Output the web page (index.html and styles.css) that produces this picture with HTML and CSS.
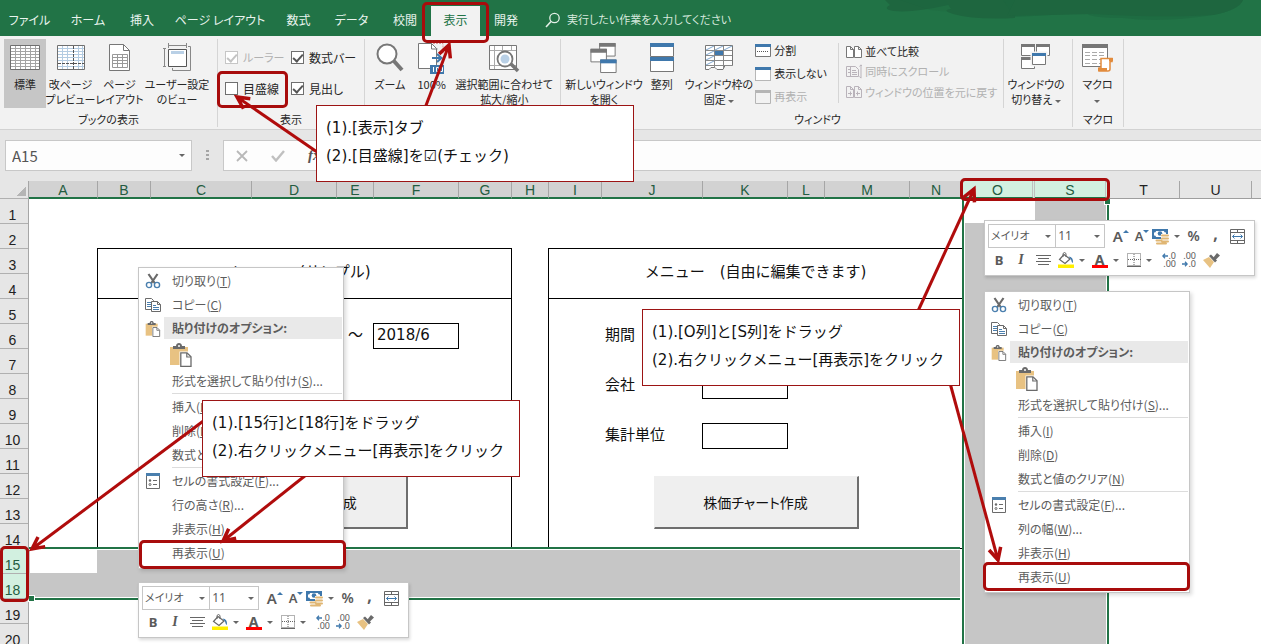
FILE: index.html
```html
<!DOCTYPE html>
<html lang="ja">
<head>
<meta charset="utf-8">
<meta name="viewport" content="width=device-width, initial-scale=1">
<title>Excel</title>
<link rel="stylesheet" href="styles.css">
</head>
<body>
<svg class="defs" aria-hidden="true">
  <defs>
    <marker id="head" markerUnits="userSpaceOnUse" markerWidth="18" markerHeight="18" refX="14" refY="9" orient="auto">
      <path d="M2 3L14 9L2 15" fill="none" stroke="#b00c0c" stroke-width="3.5"/>
      <path d="M7 6L14 9L7 12z" fill="#b00c0c"/>
    </marker>
    <symbol id="i-cut" viewBox="0 0 16 16">
      <path d="M3.500 1L10 10.500M12.500 1L6 10.500" stroke="#6a6a6a" stroke-width="2.200" fill="none"/>
      <circle cx="4" cy="12" r="2.600" fill="#fff" stroke="#4a7fae" stroke-width="1.400"/>
      <circle cx="12" cy="12" r="2.600" fill="#fff" stroke="#4a7fae" stroke-width="1.400"/>
    </symbol>
    <symbol id="i-copy" viewBox="0 0 16 16">
      <path d="M.5 1.500h6l2 2v9h-8z" fill="#fff" stroke="#6a6a6a"/>
      <path d="M2 5.500h4M2 7.500h4M2 9.500h4" stroke="#4a7fae"/>
      <path d="M6.500 4.500h6l3 3v7h-9z" fill="#fff" stroke="#6a6a6a"/>
      <path d="M12.500 4.500v3h3" fill="none" stroke="#6a6a6a"/>
      <path d="M8 8.500h3M8 10.500h6M8 12.500h6" stroke="#4a7fae"/>
    </symbol>
    <symbol id="i-paste" viewBox="0 0 22 24">
      <path d="M0 4h18v18H0z" fill="#e8c282"/>
      <path d="M3 3h3c0-4 6-4 6 0h3v3H3z" fill="#6a6a6a"/>
      <circle cx="9" cy="3" r="1" fill="#fff"/>
      <path d="M9.500 8.500h11v15h-11z" fill="#fff"/>
      <path d="M10.800 9.800h6.200l4 4v9.500H10.800z" fill="#fff" stroke="#6a6a6a" stroke-width="1.300"/>
      <path d="M16.800 10v4h4" fill="none" stroke="#6a6a6a" stroke-width="1.200"/>
    </symbol>
    <symbol id="i-format" viewBox="0 0 14 16">
      <path d="M.5 .5h13v15H.5z" fill="#fff" stroke="#6a6a6a"/>
      <path d="M0 0h14v3H0z" fill="#4a7fae"/>
      <circle cx="4" cy="7.500" r="1.200" fill="#6a6a6a"/><circle cx="4" cy="11.500" r="1" fill="none" stroke="#6a6a6a"/>
      <path d="M7 7.500h4M7 11.500h4" stroke="#6a6a6a"/>
    </symbol>
    <symbol id="i-money" viewBox="0 0 17 17">
      <path d="M1 2h14v8H1z" fill="#fff" stroke="#3f78ac" stroke-width="2"/>
      <path d="M1 2l2.500 2M15 2l-2.500 2M1 10l2.500-2" stroke="#3f78ac" stroke-width="2"/>
      <circle cx="8" cy="5.500" r="2.300" fill="#3f78ac"/>
      <path d="M9 6h8v11H4v-5h5z" fill="#fff"/>
      <path d="M10 7.500h6M10 10.500h6M10 13.500h6M4.500 12.500h5M5 15.500h9" stroke="#e0b673" stroke-width="2" stroke-linecap="round"/>
    </symbol>
    <symbol id="i-merge" viewBox="0 0 15 15">
      <path d="M.5 .5h14v14H.5zM.5 3.500h14M.5 11.500h14M7.500 .5v3M7.500 11.500v3" fill="none" stroke="#666"/>
      <path d="M2.500 7.500h10M4.500 5.500l-2 2l2 2M10.500 5.500l2 2l-2 2" fill="none" stroke="#3f78ac"/>
    </symbol>
    <symbol id="i-align" viewBox="0 0 15 12">
      <path d="M0 1.500h15M2 4.500h11M0 7.500h15M2 10.500h11" stroke="#666"/>
    </symbol>
    <symbol id="i-fill" viewBox="0 0 16 16">
      <path d="M6 2.500L12 7L7 11.500L1.500 7.500z" fill="#fff" stroke="#666" stroke-width="1.200"/>
      <path d="M5 5V1.500q1.500-2 3 0V5" fill="none" stroke="#666"/>
      <path d="M10.500 4.500q5 0 4.500 6.500q-1.500-.5-2-3.500z" fill="#3f78ac"/>
      <path d="M0 12.500h16v3.500H0z" fill="#ffef00"/>
    </symbol>
    <symbol id="i-border" viewBox="0 0 14 14">
      <path d="M.5 .5h13v12H.5zM7 1v12M1 6.500h13" fill="none" stroke="#666" stroke-dasharray="1 1"/>
      <path d="M0 13.500h14" stroke="#666"/>
    </symbol>
    <symbol id="i-brush" viewBox="0 0 17 15">
      <path d="M0 7l6-3l5 5l-4 6z" fill="#e8c282"/>
      <path d="M6 3l2-1.500l6 6L12 9.500z" fill="#6a6a6a"/>
      <path d="M10 5l4-5l3 2.500L12.500 7z" fill="#6a6a6a"/>
    </symbol>
    <symbol id="i-left" viewBox="0 0 6 6"><path d="M6 3H1M3 .8L.8 3L3 5.200" fill="none" stroke="#3f78ac" stroke-width="1.300"/></symbol>
    <symbol id="i-right" viewBox="0 0 6 6"><path d="M0 3h5M3 .8L5.200 3L3 5.200" fill="none" stroke="#3f78ac" stroke-width="1.300"/></symbol>
  </defs>
</svg>

<div class="app">
  <header class="titlebar">
    <svg class="swirl" viewBox="0 0 376 24" aria-hidden="true">
      <g fill="#1e663f"><path d="M0 0h75l-12 5q-35 8-54 6q-12-2-4-6z"/><path d="M15 8h90v10q-60 5-88-4z" opacity="0"/><path d="M16 12q20-4 40 2l40-4v8q-50 4-80-6z" opacity="0"/><path d="M15 0h80v8q-20 6-50 2z" opacity=".3"/><path d="M60 0h70v18q-40 2-62-4q-12-4-2-5z"/><path d="M118 0h240q-4 10-30 15q-50 8-90 3q-34 0-36-5l-72 4z" opacity=".55"/><path d="M122 16L130 0h228q-4 10-30 15q-50 3-120-1z"/></g>
    </svg>
    <nav class="tabs" aria-label="リボン タブ">
      <button>ファイル</button><button>ホーム</button><button>挿入</button><button>ページ レイアウト</button><button>数式</button><button>データ</button><button>校閲</button><button class="active">表示</button><button>開発</button>
    </nav>
    <label class="tell">
      <svg width="16" height="16" viewBox="0 0 16 16" aria-hidden="true"><circle cx="9.500" cy="6" r="4.700" fill="none" stroke="#e4f0e8" stroke-width="1.300"/><path d="M6 9.500L1 15" stroke="#e4f0e8" stroke-width="1.600"/></svg>
      <input type="text" placeholder="実行したい作業を入力してください" aria-label="操作アシスト">
    </label>
  </header>

  <section class="ribbon">
    <div class="group g-book">
      <div class="tools">
        <button class="big w-s on">
          <svg width="30" height="30" viewBox="0 0 30 30"><path d="M.5 2.500h29v24H.5z" fill="#fff" stroke="#6f6f6f"/><path d="M1 5.500h28M1 8.500h28M1 11.500h28M1 14.500h28M1 17.500h28M1 20.500h28M1 23.500h28M5.500 3v23M10.500 3v23M15.500 3v23M20.500 3v23M25.500 3v23" stroke="#a4a4a4"/></svg>
          <span>標準</span>
        </button>
        <button class="big w-m">
          <svg width="28" height="30" viewBox="0 0 28 30"><path d="M.5 2.500h27v24H.5z" fill="#fff" stroke="#6f6f6f"/><path d="M1 5.500h26M1 8.500h26M1 11.500h26M1 14.500h26M1 17.500h26M1 23.500h26M5.500 3v23M10.500 3v23M21.500 3v23M25.500 3v23" stroke="#b4cce2"/><path d="M16.500 3v23M1 20.500h26" stroke="#555" stroke-dasharray="3 1"/></svg>
          <span>改ページ<br>プレビュー</span>
        </button>
        <button class="big w-m">
          <svg width="22" height="30" viewBox="0 0 22 30"><path d="M.5 1.500h14l6 6v20H.5z" fill="#fff" stroke="#777"/><path d="M14.500 1.500v6h6" fill="none" stroke="#777"/><path d="M3.500 11.500h15v13h-15zM3.500 14.500h15M3.500 17.500h15M3.500 20.500h15M8.500 11.500v13M13.500 11.500v13" fill="none" stroke="#999"/></svg>
          <span>ページ<br>レイアウト</span>
        </button>
        <button class="big w-l">
          <svg width="28" height="30" viewBox="0 0 28 30"><path d="M5.500 6.500h18v17h-18z" fill="#fff" stroke="#555"/><path d="M8 8h13v3H8z" fill="#b9d0e6"/><path d="M5 2.500h18M5.500 0v5M23.500 0v5M1.500 6v17M0 5.500h3M0 23.500h3M25 3.500h2.500v24h-18V25" fill="none" stroke="#888"/></svg>
          <span>ユーザー設定<br>のビュー</span>
        </button>
      </div>
      <div class="caption">ブックの表示</div>
    </div>
    <div class="group g-show">
      <div class="checks">
        <label class="off"><input type="checkbox" checked disabled>ルーラー</label>
        <label><input type="checkbox" checked>数式バー</label>
        <label><input type="checkbox">目盛線</label>
        <label><input type="checkbox" checked>見出し</label>
      </div>
      <div class="caption">表示</div>
    </div>
    <div class="group g-zoom">
      <div class="tools">
        <button class="big w-s">
          <svg width="28" height="30" viewBox="0 0 28 30"><path d="M17 17L26 27" stroke="#777" stroke-width="4"/><circle cx="11" cy="11" r="9.500" fill="#fff" stroke="#777" stroke-width="2"/></svg>
          <span>ズーム</span>
        </button>
        <button class="big w-s">
          <svg width="28" height="30" viewBox="0 0 28 30"><path d="M.5 .5h13l5 5v20H.5z" fill="#fff" stroke="#777"/><path d="M13.500 .5v5.500h6" fill="none" stroke="#777"/><path d="M15 .5h10v10" fill="none" stroke="#d99" stroke-dasharray="2 1"/><path d="M14 15h9M19 11l4.500 4l-4.500 4" fill="none" stroke="#3f78ac" stroke-width="2"/><path d="M12 22h14v9H12z" fill="#3f78ac"/><path d="M15.500 24v5M18.500 24.500h2v4h-2zM22.500 24.500h2v4h-2z" fill="none" stroke="#fff"/></svg>
          <span>100%</span>
        </button>
        <button class="big w-x">
          <svg width="30" height="30" viewBox="0 0 30 30"><path d="M.5 2.500h27v24H.5z" fill="#fff" stroke="#777"/><path d="M1 7.500h26M1 22.500h26M5.500 3v23M13.500 3v4M22.500 3v4" stroke="#aaa"/><path d="M21 20l8 8" stroke="#777" stroke-width="3.500"/><circle cx="16" cy="16" r="7.500" fill="#fff" stroke="#777" stroke-width="1.800"/><circle cx="16" cy="16" r="4.500" fill="#b9d0e6"/></svg>
          <span>選択範囲に合わせて<br>拡大/縮小</span>
        </button>
      </div>
    </div>
    <div class="group g-window">
      <div class="tools">
        <button class="big w-xl">
          <svg width="28" height="31" viewBox="0 0 28 31"><g fill="#fff" stroke="#777"><path d="M9.500 .5h16v13h-16z"/><path d="M.5 6.500h16v13H.5z"/><path d="M10.500 17.500h16v13h-16z"/></g><path d="M9 0h17v4H9zM0 6h17v4H0z" fill="#777"/><path d="M10 17h17v4H10z" fill="#3f78ac"/></svg>
          <span>新しいウィンドウ<br>を開く</span>
        </button>
        <button class="big w-s">
          <svg width="24" height="30" viewBox="0 0 24 30"><path d="M.5 .5h23v13H.5zM.5 14.500h23v14H.5z" fill="#fff" stroke="#777"/><path d="M0 0h24v4H0zM0 14h24v4H0z" fill="#3f78ac"/></svg>
          <span>整列</span>
        </button>
        <button class="big w-xl">
          <svg width="28" height="30" viewBox="0 0 28 30"><path d="M.5 2.500h27v20H20l-2 4h-6l-2-2h-4l-2 2H.5z" fill="#fff" stroke="#777"/><path d="M1 7.500h26M1 12.500h26M1 17.500h26M1 22.500h26M9.500 3v22M18.500 3v22" stroke="#888"/><path d="M1 7l8-4M10 7l8-4M19 7l8-4M1 12l8-4M1 17l8-4M1 22l8-4" stroke="#7fa8cf"/><path d="M10 8h8v4h-8z" fill="#3f78ac"/></svg>
          <span>ウィンドウ枠の<br>固定 <i class="caret"></i></span>
        </button>
        <div class="stack">
          <button><svg width="16" height="13" viewBox="0 0 16 13"><path d="M.5 .5h15v12H.5z" fill="#fff" stroke="#777"/><path d="M0 0h16v3H0z" fill="#3f78ac"/><path d="M2 7.500h12" stroke="#555" stroke-dasharray="1 1"/></svg>分割</button>
          <button><svg width="16" height="14" viewBox="0 0 16 14"><path d="M.5 .5h15v13H.5z" fill="#fff" stroke="#777" stroke-dasharray="1 1"/><path d="M0 0h16v3H0z" fill="#3f78ac"/></svg>表示しない</button>
          <button disabled><svg width="16" height="14" viewBox="0 0 16 14"><path d="M.5 .5h15v13H.5z" fill="#f2f2f2" stroke="#b5b5b5"/><path d="M0 0h16v3H0z" fill="#b5b5b5"/></svg>再表示</button>
        </div>
        <div class="stack wide">
          <button><svg width="16" height="12" viewBox="0 0 16 12"><path d="M.5 .5h4l3 3v8h-7zM8.500 .5h4l3 3v8h-7zM4.500 .5v3h3M12.500 .5v3h3" fill="#fff" stroke="#777"/></svg>並べて比較</button>
          <button disabled><svg width="16" height="15" viewBox="0 0 16 15"><path d="M6 2.500H.5v10H6M4.500 2.500h5l3 3v7h-8z" fill="none" stroke="#b9b3ba"/><path d="M2 5.500h2M2 8.500h2M6 6.500h4M6 8.500h5M6 10.500h5M15 1v13M13.500 2.500L15 .8l1.500 1.700M13.500 12.500l1.500 1.700" fill="none" stroke="#b9b3ba"/></svg>同時にスクロール</button>
          <button disabled><svg width="16" height="12" viewBox="0 0 16 12"><path d="M.5 .5h4l3 3v8h-7zM8.500 .5h4l3 3v8h-7zM4.500 .5v3h3M12.500 .5v3h3M2 7.500h4M4.500 5.500v4M10 7.500h4M11.500 5.500v4" fill="none" stroke="#b9b3ba"/></svg>ウィンドウの位置を元に戻す</button>
        </div>
        <button class="big w-l split">
          <svg width="30" height="30" viewBox="0 0 30 30"><g fill="#fff" stroke="#777"><path d="M.5 1.500h13v11H.5z"/><path d="M15.500 1.500h13v11h-13z"/><path d="M.5 14.500h13v11H.5z"/></g><path d="M0 1h14v3H0zM15 1h14v3H15zM0 14h14v3H0z" fill="#777"/><path d="M10.500 9.500h15v13h-15z" fill="#fff" stroke="#f2f2f2" stroke-width="2"/><path d="M11.500 10.500h13v11h-13z" fill="#fff" stroke="#777"/><path d="M11 10h14v3H11z" fill="#3f78ac"/></svg>
          <span>ウィンドウの<br>切り替え <i class="caret"></i></span>
        </button>
      </div>
      <div class="caption">ウィンドウ</div>
    </div>
    <div class="group g-macro">
      <div class="tools">
        <button class="big w-m">
          <svg width="31" height="30" viewBox="0 0 31 30"><path d="M.5 1.500h25v22H.5z" fill="#fff" stroke="#777"/><path d="M0 1h26v4H0z" fill="#777"/><path d="M3 9.500h20M3 12.500h20M3 16.500h20M3 20.500h20" stroke="#aaa" stroke-dasharray="5 2"/><path d="M19 15.500h11v3h-2V26q0 2-2 2H17v-3h2z" fill="#fff" stroke="#e28b3c" stroke-width="1.500"/><path d="M16 25h9v3h-9zM27 15h4v3h-4z" fill="#e28b3c"/></svg>
          <span>マクロ<br><i class="caret"></i></span>
        </button>
      </div>
      <div class="caption">マクロ</div>
    </div>
  </section>

  <section class="formula">
    <div class="namebox"><input type="text" value="A15" aria-label="名前ボックス"><i class="caret"></i></div>
    <div class="dots"></div>
    <div class="fxbox">
      <button aria-label="キャンセル"><svg width="12" height="12" viewBox="0 0 12 12"><path d="M1 1l10 10M11 1L1 11" stroke="#b8b8b8" stroke-width="1.800"/></svg></button>
      <button aria-label="入力"><svg width="14" height="12" viewBox="0 0 14 12"><path d="M1 6l4 4.500L13 1" fill="none" stroke="#c0c0c0" stroke-width="2.400"/></svg></button>
      <button class="fx" aria-label="関数の挿入">fx</button>
      <input type="text" aria-label="数式バー">
    </div>
  </section>

  <div class="heads">
    <div class="corner"></div>
    <div>A</div><div>B</div><div>C</div><div>D</div><div>E</div><div>F</div><div>G</div><div>H</div><div>I</div><div>J</div><div>K</div><div>L</div><div>M</div><div>N</div><div class="picked">O</div><div class="picked">S</div><div class="plain">T</div><div class="plain">U</div><div class="plain"></div>
  </div>
  <main class="sheet">
    <div class="rows">
      <div>1</div><div>2</div><div>3</div><div>4</div><div>5</div><div>6</div><div>7</div><div>8</div><div>9</div><div>10</div><div>11</div><div>12</div><div>13</div><div>14</div><div class="picked">15</div><div class="picked">18</div><div>19</div><div>20</div>
    </div>
    <div class="cells">
      <div class="panel p1"></div>
      <div class="panel-title t1">メニュー　(サンプル)</div>
      <div class="cell tilde">～</div>
      <div class="entry e1">2018/6</div>
      <button class="sheet-btn b1">株価チャート作成</button>

      <div class="panel p2"></div>
      <div class="panel-title t2">メニュー　(自由に編集できます)</div>
      <div class="cell l1">期間</div>
      <div class="cell l2">会社</div>
      <div class="cell l3">集計単位</div>
      <div class="entry e2"></div>
      <div class="entry e3"></div>
      <button class="sheet-btn b2">株価チャート作成</button>

      <div class="sel rowsel"></div>
      <div class="blank a15"></div>
      <div class="sel colsel"></div>
      <div class="blank o1"></div>
    </div>
  </main>

  <div class="menu menu-row" role="menu">
    <button><svg><use href="#i-cut"/></svg>切り取り(<u>T</u>)</button>
    <button><svg><use href="#i-copy"/></svg>コピー(<u>C</u>)</button>
    <div class="menu-head"><svg><use href="#i-paste"/></svg><b>貼り付けのオプション:</b></div>
    <button class="paste" aria-label="貼り付け"><svg><use href="#i-paste"/></svg></button>
    <button>形式を選択して貼り付け(<u>S</u>)...</button>
    <hr>
    <button>挿入(<u>I</u>)</button>
    <button>削除(<u>D</u>)</button>
    <button>数式と値のクリア(<u>N</u>)</button>
    <hr>
    <button><svg><use href="#i-format"/></svg>セルの書式設定(<u>F</u>)...</button>
    <button>行の高さ(<u>R</u>)...</button>
    <button>非表示(<u>H</u>)</button>
    <button>再表示(<u>U</u>)</button>
  </div>
  <div class="menu menu-col" role="menu">
    <button><svg><use href="#i-cut"/></svg>切り取り(<u>T</u>)</button>
    <button><svg><use href="#i-copy"/></svg>コピー(<u>C</u>)</button>
    <div class="menu-head"><svg><use href="#i-paste"/></svg><b>貼り付けのオプション:</b></div>
    <button class="paste" aria-label="貼り付け"><svg><use href="#i-paste"/></svg></button>
    <button>形式を選択して貼り付け(<u>S</u>)...</button>
    <hr>
    <button>挿入(<u>I</u>)</button>
    <button>削除(<u>D</u>)</button>
    <button>数式と値のクリア(<u>N</u>)</button>
    <hr>
    <button><svg><use href="#i-format"/></svg>セルの書式設定(<u>F</u>)...</button>
    <button>列の幅(<u>W</u>)...</button>
    <button>非表示(<u>H</u>)</button>
    <button>再表示(<u>U</u>)</button>
  </div>

  <div class="mini mini-row">
    <div class="mini-line">
      <div class="pick font"><select aria-label="フォント"><option>メイリオ</option></select><i class="caret"></i></div>
      <div class="pick size"><select aria-label="フォント サイズ"><option>11</option></select><i class="caret"></i></div>
      <button class="grow" aria-label="拡大">A<i class="up"></i></button>
      <button class="grow small" aria-label="縮小">A<i class="down"></i></button>
      <button class="drop" aria-label="通貨"><svg width="17" height="17"><use href="#i-money"/></svg><i class="caret"></i></button>
      <button class="sym">%</button>
      <button class="sym comma">,</button>
      <button class="merge" aria-label="結合"><svg width="15" height="15"><use href="#i-merge"/></svg></button>
    </div>
    <div class="mini-line second">
      <button class="bold">B</button>
      <button class="ital">I</button>
      <button aria-label="中央揃え"><svg width="15" height="12"><use href="#i-align"/></svg></button>
      <button class="drop" aria-label="塗りつぶし"><svg width="16" height="16"><use href="#i-fill"/></svg><i class="caret"></i></button>
      <button class="drop"><span class="ink">A</span><i class="caret"></i></button>
      <button class="drop" aria-label="罫線"><svg width="14" height="14"><use href="#i-border"/></svg><i class="caret"></i></button>
      <button class="dec"><span><svg width="6" height="6"><use href="#i-left"/></svg>.0</span><span>.00</span></button>
      <button class="dec"><span>.00</span><span><svg width="6" height="6"><use href="#i-right"/></svg>.0</span></button>
      <button aria-label="書式のコピー"><svg width="17" height="15"><use href="#i-brush"/></svg></button>
    </div>
  </div>
  <div class="mini mini-col">
    <div class="mini-line">
      <div class="pick font"><select aria-label="フォント"><option>メイリオ</option></select><i class="caret"></i></div>
      <div class="pick size"><select aria-label="フォント サイズ"><option>11</option></select><i class="caret"></i></div>
      <button class="grow" aria-label="拡大">A<i class="up"></i></button>
      <button class="grow small" aria-label="縮小">A<i class="down"></i></button>
      <button class="drop" aria-label="通貨"><svg width="17" height="17"><use href="#i-money"/></svg><i class="caret"></i></button>
      <button class="sym">%</button>
      <button class="sym comma">,</button>
      <button class="merge" aria-label="結合"><svg width="15" height="15"><use href="#i-merge"/></svg></button>
    </div>
    <div class="mini-line second">
      <button class="bold">B</button>
      <button class="ital">I</button>
      <button aria-label="中央揃え"><svg width="15" height="12"><use href="#i-align"/></svg></button>
      <button class="drop" aria-label="塗りつぶし"><svg width="16" height="16"><use href="#i-fill"/></svg><i class="caret"></i></button>
      <button class="drop"><span class="ink">A</span><i class="caret"></i></button>
      <button class="drop" aria-label="罫線"><svg width="14" height="14"><use href="#i-border"/></svg><i class="caret"></i></button>
      <button class="dec"><span><svg width="6" height="6"><use href="#i-left"/></svg>.0</span><span>.00</span></button>
      <button class="dec"><span>.00</span><span><svg width="6" height="6"><use href="#i-right"/></svg>.0</span></button>
      <button aria-label="書式のコピー"><svg width="17" height="15"><use href="#i-brush"/></svg></button>
    </div>
  </div>

  <div class="ring r-tab"></div>
  <div class="ring r-check"></div>
  <div class="ring r-cols"></div>
  <div class="ring r-rows"></div>
  <div class="ring r-unhide-row"></div>
  <div class="ring r-unhide-col"></div>
  <svg class="arrows" aria-hidden="true">
    <g stroke="#b00c0c" stroke-width="3" marker-end="url(#head)">
      <path d="M320 154L237 97"/><path d="M425 108L449 45"/><path d="M206 419L32 549"/><path d="M306 475L223 541"/><path d="M918 311L974 189"/><path d="M950 383L998 560"/>
    </g>
  </svg>
  <div class="note n-tab"><p>(1).[表示]タブ</p><p>(2).[目盛線]を☑(チェック)</p></div>
  <div class="note n-row"><p>(1).[15行]と[18行]をドラッグ</p><p>(2).右クリックメニュー[再表示]をクリック</p></div>
  <div class="note n-col"><p>(1).[O列]と[S列]をドラッグ</p><p>(2).右クリックメニュー[再表示]をクリック</p></div>
</div>
</body>
</html>
```
FILE: styles.css
```css
:root {
  --green: #217346;
  --red: #a80c0c;
  --cols: 69px 53px 101px 85px 37px 85px 53px 37px 53px 101px 85px 37px 85px 53px 72px 73px 72px 72px 1fr;
  --ui: "Noto Sans CJK JP", "Noto Sans", sans-serif;
  --cell: "DejaVu Sans", "Noto Sans CJK JP", sans-serif;
  --head: "Liberation Sans", sans-serif;
}
* { box-sizing: border-box; }
body { margin: 0; font: 12px/15px var(--ui); font-feature-settings: "palt"; color: #262626; }
button, input, select { font: inherit; font-feature-settings: inherit; color: inherit; margin: 0; padding: 0; border: 0; background: none; }
button { white-space: nowrap; }
svg { display: block; flex: none; }
.defs { position: absolute; width: 0; height: 0; }
.app { position: relative; display: flex; flex-direction: column; height: 100vh; overflow: hidden; background: #e6e6e6; }
.caret { display: inline-block; border: 3px solid transparent; border-top-color: #666; border-bottom: 0; vertical-align: middle; }

/* title bar and tabs */
.titlebar { position: relative; display: flex; height: 36px; background: var(--green); color: #e9f4ee; }
.swirl { position: absolute; top: 0; right: 0; width: 376px; height: 24px; }
.tabs { display: grid; grid-template-columns: 59px 58px 50px 106px 51px 55px 52px 49px 52px; align-items: end; }
.tabs button { height: 30px; padding-bottom: 3px; }
.tabs .active { background: #f2f2f2; color: var(--green); }
.tell { display: flex; align-items: center; gap: 6px; flex: 1; padding: 3px 0 0 13px; font-size: 11px; }
.tell input { flex: 1; outline: 0; }
.tell input::placeholder { color: #d5e8dc; opacity: 1; }

/* ribbon */
.ribbon { display: flex; height: 94px; padding-top: 3px; background: #f2f2f2; border-bottom: 1px solid #d2d2d2; font-size: 11px; }
.group { display: flex; flex-direction: column; justify-content: space-between; padding: 0 4px; height: 88px; border-right: 1px solid #d5d5d5; }
.tools { display: flex; height: 69px; }
.caption { text-align: center; }
.g-book { width: 218px; }
.g-show { width: 147px; }
.g-zoom { width: 196px; }
.g-window { width: 512px; padding-left: 6px; }
.g-macro { width: 51px; padding: 0; }
.big { display: flex; flex-direction: column; align-items: center; justify-content: flex-start; gap: 4px; padding-top: 4px; text-align: center; }
.big svg { height: 30px; overflow: visible; }
.w-s { width: 42px; }
.w-m { width: 49px; }
.w-l { width: 66px; }
.w-x { width: 104px; }
.w-xl { width: 74px; }
.on { background: #c6c6c6; }
.checks { display: grid; grid-template-columns: 66px 66px; grid-auto-rows: 31px; padding: 3px 0 0 3px; font-size: 12px; }
.checks label { display: flex; align-items: center; gap: 5px; white-space: nowrap; }
.checks input { appearance: none; width: 13px; height: 13px; flex: none; border: 1px solid #6f6f6f; background: #fff; }
.checks input:checked { display: grid; place-items: center; }
.checks input:checked::after { content: ""; width: 4px; height: 8px; margin-bottom: 2px; border: solid #555; border-width: 0 2px 2px 0; rotate: 42deg; }
.checks .off { color: #b1b1b1; font-size: 11px; }
.checks .off input { border-color: #c6c6c6; }
.checks .off input::after { border-color: #c3c3c3; }
.stack { display: flex; flex-direction: column; align-items: flex-start; width: 84px; }
.stack button { display: flex; align-items: center; gap: 3px; height: 23px; }
.stack button:disabled { color: #b1b1b1; }
.stack.wide { width: 167px; padding-left: 7px; border-left: 1px solid #d5d5d5; height: 60px; margin-top: 4px; }
.stack.wide button { height: 22px; }
.stack.wide button:first-child { height: 18px; }
.split { border-left: 1px solid #d5d5d5; }

/* formula bar */
.formula { display: flex; align-items: flex-start; height: 51px; padding: 10px 0 0 5px; }
.namebox, .fxbox { display: flex; align-items: center; height: 31px; border: 1px solid #c8c8c8; background: #fdfdfd; }
.namebox { width: 187px; padding: 0 6px; }
.namebox input { flex: 1; min-width: 0; font-size: 15px; color: #555; }
.dots { width: 3px; height: 11px; margin: 10px 14px 0; background: repeating-linear-gradient(#a5a5a5 0 2px, transparent 2px 4px); }
.fxbox { flex: 1; padding-left: 12px; gap: 23px; border-right: 0; }
.fxbox input { flex: 1; }
.fx { font: italic bold 15px "Liberation Serif", serif; color: #555; }

/* sheet */
.heads { display: grid; grid-template-columns: 29px var(--cols); height: 18px; font: 14px/19px var(--head); text-align: center; color: #245c41; }
.heads > div { border-right: 1px solid #a6a6a6; border-bottom: 2px solid var(--green); background: #d2d2d2; height: 18px; }
.heads .corner { background: linear-gradient(135deg, transparent 50%, #b5b5b5 50%) 16px 5px / 10px 10px no-repeat; border-bottom: 1px solid #b0b0b0; }
.heads .picked { background: #d2f0e0; border-right: 3px double #c0c0c0; }
.heads .plain { background: #e6e6e6; color: #222; border-bottom: 1px solid #9e9e9e; }
.heads .plain:last-child { border-right: 0; }
.sheet { display: flex; flex: 1; min-height: 0; overflow: hidden; }
.rows { width: 29px; flex: none; display: grid; grid-auto-rows: 25px; align-content: start; border-right: 1px solid #a6a6a6; font: 14px/16px var(--head); color: #222; }
.rows div { display: flex; align-items: flex-end; justify-content: center; padding-right: 3px; border-bottom: 1px solid #b0b0b0; }
.rows .picked { background: #d2f0e0; color: #245c41; }
.cells { flex: 1; display: grid; grid-template-columns: var(--cols); grid-template-rows: repeat(18, 25px); background: #fff; font: 15px/22px var(--cell); font-feature-settings: normal; color: #111; }
.panel { border: 1px solid #000; margin: -1px 0 0 -1px; }
.p1 { grid-area: 3 / 2 / 15 / 8; }
.p2 { grid-area: 3 / 9 / 15 / 15; }
.panel-title { margin-left: -1px; border-bottom: 1px solid #000; text-align: center; line-height: 47px; white-space: nowrap; }
.t1 { grid-area: 3 / 2 / 5 / 8; padding-right: 14px; }
.t2 { grid-area: 3 / 9 / 5 / 15; }
.cell { padding-left: 3px; white-space: nowrap; }
.tilde { grid-area: 6 / 5; padding: 0; text-align: center; }
.l1 { grid-area: 6 / 10; }
.l2 { grid-area: 8 / 10; }
.l3 { grid-area: 10 / 10; }
.entry { margin: -1px 0 0 -1px; padding-left: 3px; border: 1px solid #000; }
.e1 { grid-area: 6 / 6; }
.e2 { grid-area: 8 / 11; }
.e3 { grid-area: 10 / 11; }
.sheet-btn { justify-self: center; width: 205px; height: 53px; margin-top: 2px; background: #efefef; border: 1px solid #efefef; border-right: 2px solid #6e6e6e; border-bottom: 2px solid #6e6e6e; font: 14px/20px var(--ui); font-feature-settings: "palt"; }
.b1 { grid-area: 12 / 2 / 15 / 8; }
.b2 { grid-area: 12 / 9 / 15 / 15; }
.sel { position: relative; background: #c6c6c6 content-box; padding: 1px; border: 2px solid var(--green); }
.sel::after { content: ""; position: absolute; width: 5px; height: 5px; background: var(--green); border: solid #fff; border-width: 0; }
.rowsel { grid-area: 15 / 1 / 17 / 15; margin: -2px 3px -1px 0; border-width: 2px 0; padding: 1px 0; }
.rowsel::after { left: 0; bottom: -3px; box-shadow: 0 0 0 1px #fff; }
.colsel { grid-area: 1 / 15 / 19 / 17; margin: 0 -1px; border-width: 0 2px; padding: 0 1px; }
.colsel::after { right: -3px; top: 0; box-shadow: 0 0 0 1px #fff; }
.blank { background: #fff; z-index: 1; }
.a15 { grid-area: 15 / 1; margin: 0 1px 1px; }
.o1 { grid-area: 1 / 15; margin: 0 0 1px 2px; }

/* context menus */
.menu { position: absolute; width: 206px; padding: 1px 1px 3px; background: #fff; border: 1px solid #c6c6c6; box-shadow: 2px 2px 4px rgba(0, 0, 0, .15); color: #5c5c5c; z-index: 2; }
.menu-row { left: 138px; top: 267px; }
.menu-col { left: 984px; top: 291px; }
.menu button, .menu-head { position: relative; display: flex; align-items: center; width: 100%; height: 24px; padding: 0 0 2px 32px; }
.menu svg { position: absolute; left: 5px; top: 4px; width: 16px; height: 16px; }
.menu .menu-head { height: 22px; background: linear-gradient(#e9e9e9, #e9e9e9) 24px 0 no-repeat; }
.menu .paste { height: 30px; }
.menu .paste svg { left: 30px; width: 22px; height: 24px; }
.menu hr { height: 1px; margin: 0 0 1px 32px; border: 0; background: #dcdcdc; }

/* mini toolbars */
.mini { position: absolute; width: 271px; height: 56px; padding: 3px; background: #fff; border: 1px solid #c6c6c6; box-shadow: 1px 2px 3px rgba(0, 0, 0, .15); color: #5a5a5a; z-index: 2; }
.mini-row { left: 138px; top: 582px; }
.mini-col { left: 984px; top: 220px; }
.mini-line { display: flex; align-items: center; height: 24px; }
.mini-line button { display: flex; align-items: center; justify-content: center; width: 22px; }
.pick { position: relative; height: 24px; border: 1px solid #c6c6c6; }
.pick select { appearance: none; width: 100%; height: 100%; padding: 0 0 2px 2px; outline: 0; }
.pick .caret { position: absolute; right: 4px; top: 10px; pointer-events: none; }
.font { width: 69px; }
.font select { font-size: 11px; }
.size { width: 51px; margin: 0 4px 0 -1px; }
.size select { font-family: "Noto Sans", sans-serif; }
.mini-line .grow { width: 23px; font: 600 15px/20px "Noto Sans", sans-serif; }
.mini-line .small { width: 20px; font-size: 13px; }
.up, .down { width: 6px; margin-bottom: 10px; border: 3px solid transparent; }
.up { border-top: 0; border-bottom-color: #3f78ac; }
.down { border-bottom: 0; border-top-color: #3f78ac; }
.mini-line .drop { width: 28px; gap: 5px; }
.mini-line.second .drop { width: 34px; }
.mini-line .sym { font: 600 14px/20px "Noto Sans", sans-serif; width: 28px; }
.mini-line .comma { width: 16px; padding-bottom: 6px; font-size: 18px; }
.mini-line .merge { width: 28px; }
.mini-line .bold { font: bold 13px/20px "Noto Sans", sans-serif; }
.mini-line .ital { font: italic bold 14px/20px "Liberation Serif", serif; }
.ink { width: 16px; height: 16px; border-bottom: 3px solid #f00; font: bold 14px/15px "Noto Sans", sans-serif; }
.mini-line .dec { flex-direction: column; align-items: flex-end; width: 20px; font: 9px/8px "Noto Sans", sans-serif; }
.dec span { display: flex; align-items: center; }
.second button:last-child { width: 30px; }

/* annotations */
.ring { position: absolute; border: 3px solid var(--red); border-radius: 5px; pointer-events: none; z-index: 3; }
.r-tab { left: 422px; top: 2px; width: 67px; height: 41px; }
.r-check { left: 217px; top: 71px; width: 71px; height: 37px; }
.r-cols { left: 960px; top: 178px; width: 150px; height: 23px; }
.r-rows { left: 0; top: 546px; width: 29px; height: 56px; }
.r-unhide-row { left: 139px; top: 540px; width: 207px; height: 29px; }
.r-unhide-col { left: 983px; top: 562px; width: 207px; height: 29px; }
.arrows { position: absolute; inset: 0; width: 100%; height: 100%; pointer-events: none; z-index: 3; }
.note { position: absolute; width: 318px; height: 77px; padding: 8px 9px; background: #fff; border: 1px solid #9c1414; font: 15px/28px var(--cell); font-feature-settings: normal; color: #111; white-space: nowrap; z-index: 4; }
.note p { margin: 0; }
.n-tab { left: 316px; top: 105px; }
.n-row { left: 202px; top: 400px; }
.n-col { left: 642px; top: 309px; }
```
